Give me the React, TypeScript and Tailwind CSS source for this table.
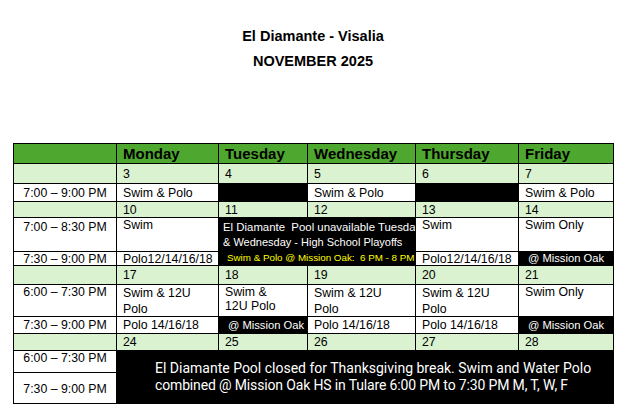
import React from "react";

const G = "bg-[#daf2d0]";

function Txt({ children, className = "" }: { children?: React.ReactNode; className?: string }) {
  return <div className={`flex items-center pl-[6px] text-[12.3px] leading-[14px] text-black whitespace-nowrap overflow-hidden ${className}`}>{children}</div>;
}

function Time({ children, className = "" }: { children?: React.ReactNode; className?: string }) {
  return <div className={`flex justify-center text-[12.3px] leading-[14px] text-black whitespace-nowrap bg-white ${className}`}>{children}</div>;
}

function Head({ children }: { children?: React.ReactNode }) {
  return <div className="flex items-center pl-[6px] bg-[#4ea72e] text-[15px] font-bold leading-[18px] text-black">{children}</div>;
}

function DateRow({ days }: { days: string[] }) {
  return (
    <>
      <div className={G} />
      {days.map((d) => (
        <div key={d} className={`${G} flex items-center pl-[6px] text-[12.3px] leading-[14px] text-black`}>{d}</div>
      ))}
    </>
  );
}

function Mission() {
  return <div className="flex items-center pl-[9px] bg-black text-white text-[11.2px] leading-[13px] whitespace-nowrap overflow-hidden">@ Mission Oak</div>;
}

export default function App() {
  return (
    <div className="w-[626px] h-[419px] bg-white font-['Liberation_Sans',Arial,sans-serif] overflow-hidden">
      <div className="pt-[24px] text-center text-[14.5px] font-bold leading-[25px] text-black">
        <div>El Diamante - Visalia</div>
        <div>NOVEMBER 2025</div>
      </div>
      <div className="mt-[69px] ml-[13px] w-[601px] grid grid-cols-[102px_101px_88px_107px_102px_94px] grid-rows-[19px_19px_17px_15px_33px_13px_18px_31px_16px_16px_21px_30px] gap-[1px] p-[1px] bg-black">
        {/* header */}
        <div className="bg-[#4ea72e]" />
        <Head>Monday</Head>
        <Head>Tuesday</Head>
        <Head>Wednesday</Head>
        <Head>Thursday</Head>
        <Head>Friday</Head>

        <DateRow days={["3", "4", "5", "6", "7"]} />

        <Time className="items-center">7:00 – 9:00 PM</Time>
        <Txt className="bg-white">Swim &amp; Polo</Txt>
        <div className="bg-black" />
        <Txt className="bg-white">Swim &amp; Polo</Txt>
        <div className="bg-black" />
        <Txt className="bg-white">Swim &amp; Polo</Txt>

        <DateRow days={["10", "11", "12", "13", "14"]} />

        <Time className="items-start pt-[2px]">7:00 – 8:30 PM</Time>
        <Txt className="bg-white !items-start">Swim</Txt>
        <div className="row-span-2 col-span-2 bg-black overflow-hidden pl-[4px] pt-[2px] text-white whitespace-nowrap">
          <div className="text-[11.4px] leading-[15px]">El Diamante&nbsp; Pool unavailable Tuesday</div>
          <div className="text-[11px] leading-[15px]">&amp; Wednesday - High School Playoffs</div>
          <div className="pl-[4px] text-[9.8px] leading-[15px] text-[#ffff00]">Swim &amp; Polo @ Mission Oak:&nbsp; 6 PM - 8 PM</div>
        </div>
        <Txt className="bg-white !items-start">Swim</Txt>
        <Txt className="bg-white !items-start">Swim Only</Txt>

        <Time className="items-center">7:30 – 9:00 PM</Time>
        <Txt className="bg-white">Polo12/14/16/18</Txt>
        <Txt className="bg-white">Polo12/14/16/18</Txt>
        <Mission />

        <DateRow days={["17", "18", "19", "20", "21"]} />

        <Time className="items-start pt-0">6:00 – 7:30 PM</Time>
        <Txt className="bg-white !items-start !leading-[16px]">
          <div>Swim &amp; 12U<br />Polo</div>
        </Txt>
        <Txt className="bg-white !items-start">
          <div>Swim &amp;<br />12U Polo</div>
        </Txt>
        <Txt className="bg-white !items-start !leading-[16px]">
          <div>Swim &amp; 12U<br />Polo</div>
        </Txt>
        <Txt className="bg-white !items-start !leading-[16px]">
          <div>Swim &amp; 12U<br />Polo</div>
        </Txt>
        <Txt className="bg-white !items-start">Swim Only</Txt>

        <Time className="items-center">7:30 – 9:00 PM</Time>
        <Txt className="bg-white">Polo 14/16/18</Txt>
        <Mission />
        <Txt className="bg-white">Polo 14/16/18</Txt>
        <Txt className="bg-white">Polo 14/16/18</Txt>
        <Mission />

        <DateRow days={["24", "25", "26", "27", "28"]} />

        <Time className="items-start pt-0">6:00 – 7:30 PM</Time>
        <div className="row-span-2 col-span-5 bg-black pl-[38px] flex flex-col justify-center text-white font-['Roboto',sans-serif] text-[14px] leading-[17px] whitespace-nowrap">
          <div>El Diamante Pool closed for Thanksgiving break. Swim and Water Polo</div>
          <div className="tracking-[-0.15px]">combined @ Mission Oak HS in Tulare 6:00 PM to 7:30 PM M, T, W, F</div>
        </div>
        <Time className="items-end pb-[7px]">7:30 – 9:00 PM</Time>
      </div>
    </div>
  );
}
